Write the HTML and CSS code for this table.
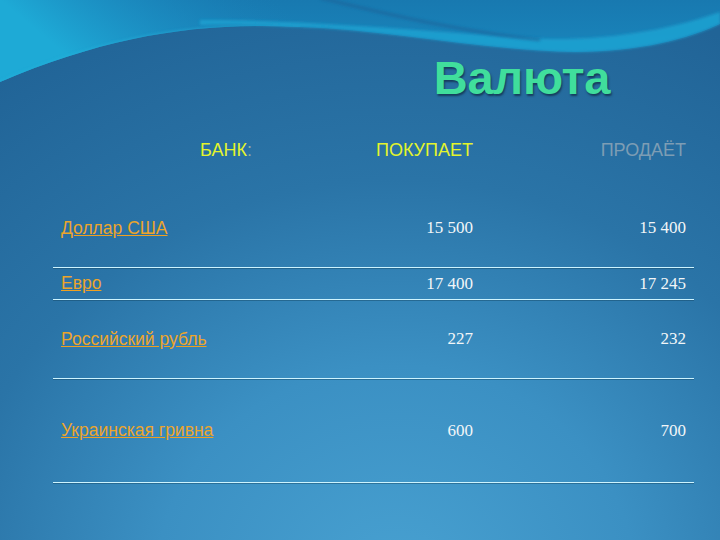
FILE: index.html
```html
<!DOCTYPE html>
<html lang="ru">
<head>
<meta charset="utf-8">
<title>Валюта</title>
<link rel="stylesheet" href="styles.css">
</head>
<body>
<div class="slide">
  <svg class="waves" width="720" height="140" viewBox="0 0 720 140" aria-hidden="true">
    <defs>
      <linearGradient id="topg" x1="0" y1="0" x2="0" y2="1">
        <stop offset="0" stop-color="#1879b0"/>
        <stop offset="1" stop-color="#1a8cc2"/>
      </linearGradient>
      <linearGradient id="leftglow" x1="0" y1="0" x2="1" y2="-0.3">
        <stop offset="0" stop-color="#1eaad6"/>
        <stop offset="0.35" stop-color="#1c92c6" stop-opacity="0.6"/>
        <stop offset="0.7" stop-color="#1a82ba" stop-opacity="0"/>
      </linearGradient>
      <clipPath id="topclip">
        <path d="M0,0 H720 V24 C690,38 640,52 575,52 C480,50 390,30 300,27 C200,22 110,35 0,82 Z"/>
      </clipPath>
      <filter id="blur" x="-10%" y="-50%" width="120%" height="200%">
        <feGaussianBlur stdDeviation="1.6"/>
      </filter>
    </defs>
    <path d="M0,0 H720 V24 C690,38 640,52 575,52 C480,50 390,30 300,27 C200,22 110,35 0,82 Z" fill="url(#topg)"/>
    <g clip-path="url(#topclip)">
      <rect x="0" y="0" width="360" height="90" fill="url(#leftglow)"/>
      <path d="M0,84 C110,37 200,24 300,29" fill="none" stroke="#25b4dc" stroke-width="6" opacity="0.5" filter="url(#blur)"/>
    </g>
    <path d="M200,20 C300,20 420,30 520,38 C600,43 670,30 720,12 V24 C690,38 640,52 575,52 C480,50 390,30 300,27 C260,25 230,24 200,25 Z" fill="#1fa3d2" opacity="0.85" filter="url(#blur)"/>
    <path d="M320,-2 C380,12 450,30 540,40" fill="none" stroke="#1a5f95" stroke-width="3" opacity="0.55" filter="url(#blur)"/>
  </svg>

  <div class="content">
    <h1 class="title">Валюта</h1>

    <div class="table">
      <div class="row head">
        <div class="cell c1">БАНК<span class="colon">:</span></div>
        <div class="cell num">ПОКУПАЕТ</div>
        <div class="cell num faded">ПРОДАЁТ</div>
      </div>
      <div class="row r1">
        <div class="cell c1"><a href="#">Доллар США</a></div>
        <div class="cell num val">15 500</div>
        <div class="cell num val">15 400</div>
      </div>
      <div class="row r2">
        <div class="cell c1"><a href="#">Евро</a></div>
        <div class="cell num val">17 400</div>
        <div class="cell num val">17 245</div>
      </div>
      <div class="row r3">
        <div class="cell c1"><a href="#">Российский рубль</a></div>
        <div class="cell num val">227</div>
        <div class="cell num val">232</div>
      </div>
      <div class="row r4">
        <div class="cell c1"><a href="#">Украинская гривна</a></div>
        <div class="cell num val">600</div>
        <div class="cell num val">700</div>
      </div>
    </div>
  </div>
</div>
</body>
</html>
```

FILE: styles.css
```css
html, body {
  margin: 0;
  padding: 0;
}

body {
  width: 720px;
  height: 540px;
  overflow: hidden;
  font-family: "Liberation Sans", Arial, sans-serif;
}

.slide {
  position: relative;
  width: 720px;
  height: 540px;
  background: radial-gradient(ellipse 95% 115% at 55% 108%, #48a1d1 0%, #3b90c3 35%, #2a74a7 65%, #216497 100%);
  overflow: hidden;
}

.waves {
  position: absolute;
  top: 0;
  left: 0;
  z-index: 0;
}

.content {
  position: relative;
  z-index: 1;
}

.title {
  margin: 0;
  padding: 50px 0 0 324px;
  text-align: center;
  font-family: "Liberation Sans", Arial, sans-serif;
  font-weight: bold;
  font-size: 47px;
  line-height: 56px;
  color: #40de9c;
  text-shadow: 1px 2px 2px rgba(20, 55, 85, 0.9);
  letter-spacing: -0.3px;
}

.table {
  margin-left: 53px;
  width: 641px;
}

.row {
  display: grid;
  grid-template-columns: 207px 221px 213px;
  align-items: center;
  box-sizing: border-box;
}

.head {
  height: 83px;
  padding-top: 5px;
  font-size: 18px;
  color: #e4f42c;
}

.r1, .r2, .r3, .r4 {
  border-bottom: 1px solid #cdf4ff;
  box-shadow: 0 1px 0 rgba(20, 70, 100, 0.45);
}

.r1 { height: 79px; }
.r2 { height: 32px; }
.r3 { height: 79px; }
.r4 { height: 104px; }

.cell {
  padding: 0 8px;
  white-space: nowrap;
}

.head .c1 {
  text-align: right;
}

.colon {
  color: #8fb0a0;
}

.num {
  text-align: right;
}

.faded {
  color: #7d9db4;
}

.c1 a {
  font-size: 17.5px;
  color: #eca52c;
  text-decoration: underline;
  text-decoration-color: #f0a020;
}

.val {
  font-family: "Liberation Serif", "Times New Roman", serif;
  font-size: 17px;
  color: #f2f6f8;
}
```
